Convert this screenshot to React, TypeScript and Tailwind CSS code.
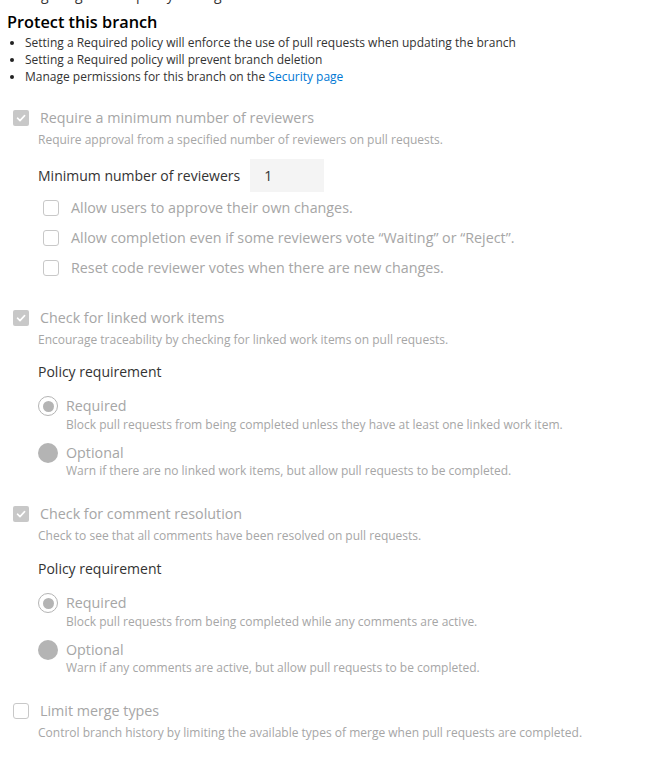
import React from "react";

const font = { fontFamily: '"Open Sans", "Noto Sans", sans-serif' };

function CheckedBox() {
  return (
    <span className="flex h-4 w-4 shrink-0 items-center justify-center rounded-[2px] bg-[#c8c8c8]">
      <svg width="12" height="12" viewBox="0 0 12 12" fill="none">
        <path d="M2.5 6.2 L5 8.6 L9.6 3.6" stroke="#fff" strokeWidth="1.6" strokeLinecap="round" strokeLinejoin="round" />
      </svg>
    </span>
  );
}

function EmptyBox() {
  return <span className="block h-4 w-4 shrink-0 rounded-[3px] border border-[#c8c8c8] bg-white" />;
}

function RadioOn() {
  return (
    <span className="flex h-[20px] w-[20px] shrink-0 items-center justify-center rounded-full border border-[#b4b4b4] bg-white">
      <span className="block h-[11px] w-[11px] rounded-full bg-[#b4b4b4]" />
    </span>
  );
}

function RadioOff() {
  return <span className="block h-[20px] w-[20px] shrink-0 rounded-full bg-[#b4b4b4]" />;
}

function SectionHead({ checked, title, desc }: { checked: boolean; title: string; desc: string }) {
  return (
    <div>
      <div className="flex items-center gap-[11px] pl-[13px]">
        {checked ? <CheckedBox /> : <EmptyBox />}
        <span className="text-[14.3px] leading-[18px] text-[#a6a6a6]">{title}</span>
      </div>
      <div className="mt-[5px] pl-[38px] text-[12px] leading-[16px] text-[#a6a6a6]">{desc}</div>
    </div>
  );
}

function Policy({ req, opt, gap }: { req: string; opt: string; gap: string }) {
  return (
    <div className="pl-[38px]">
      <div className={`${gap} text-[14px] leading-[18px] text-[#333]`}>Policy requirement</div>
      <div className="mt-[15px] flex items-start gap-[8px]">
        <RadioOn />
        <div>
          <div className="text-[14.3px] leading-[20px] text-[#a6a6a6]">Required</div>
          <div className="mt-[1px] text-[12px] leading-[16px] text-[#a6a6a6]">{req}</div>
        </div>
      </div>
      <div className="mt-[10px] flex items-start gap-[8px]">
        <RadioOff />
        <div>
          <div className="text-[14.3px] leading-[20px] text-[#a6a6a6]">Optional</div>
          <div className="text-[12px] leading-[16px] text-[#a6a6a6]">{opt}</div>
        </div>
      </div>
    </div>
  );
}

function SubCheck({ text }: { text: string }) {
  return (
    <div className="flex h-[30px] items-center gap-[12px] pl-[43px]">
      <EmptyBox />
      <span className="text-[14.3px] text-[#a6a6a6]">{text}</span>
    </div>
  );
}

function Bullet({ children }: { children: React.ReactNode }) {
  return (
    <li className="flex items-center">
      <span className="ml-[10px] mr-[11px] block h-[4px] w-[4px] rounded-full bg-[#222]" />
      <span>{children}</span>
    </li>
  );
}

export default function App() {
  return (
    <div className="h-[761px] w-[650px] overflow-hidden bg-white" style={font}>
      <div className="-mt-[14px] pl-[7px] text-[14px] leading-[18px] text-[#333]">Configuring branch policy settings</div>
      <div className="mt-[7px] pl-[7px] text-[16.3px] font-semibold leading-[22px] text-black">Protect this branch</div>
      <ul className="mt-[1px] text-[12px] leading-[17px] text-[#333]">
        <Bullet>Setting a Required policy will enforce the use of pull requests when updating the branch</Bullet>
        <Bullet>Setting a Required policy will prevent branch deletion</Bullet>
        <Bullet>
          Manage permissions for this branch on the <span className="text-[#0078d4]">Security page</span>
        </Bullet>
      </ul>

      <div className="mt-[24px]">
        <SectionHead checked title="Require a minimum number of reviewers" desc="Require approval from a specified number of reviewers on pull requests." />
        <div className="mt-[11px] flex items-center gap-[10px] pl-[38px]">
          <span className="text-[14px] text-[#333]">Minimum number of reviewers</span>
          <div className="flex h-[33px] w-[74px] items-center bg-[#f4f4f4] pl-[14px] text-[14px] text-[#333]">1</div>
        </div>
        <div className="mt-[1px]">
          <SubCheck text="Allow users to approve their own changes." />
          <SubCheck text={"Allow completion even if some reviewers vote \u201cWaiting\u201d or \u201cReject\u201d."} />
          <SubCheck text="Reset code reviewer votes when there are new changes." />
        </div>
      </div>

      <div className="mt-[26px]">
        <SectionHead checked title="Check for linked work items" desc="Encourage traceability by checking for linked work items on pull requests." />
        <Policy gap="mt-[15px]" req="Block pull requests from being completed unless they have at least one linked work item." opt="Warn if there are no linked work items, but allow pull requests to be completed." />
      </div>

      <div className="mt-[26px]">
        <SectionHead checked title="Check for comment resolution" desc="Check to see that all comments have been resolved on pull requests." />
        <Policy gap="mt-[16px]" req="Block pull requests from being completed while any comments are active." opt="Warn if any comments are active, but allow pull requests to be completed." />
      </div>

      <div className="mt-[26px]">
        <SectionHead checked={false} title="Limit merge types" desc="Control branch history by limiting the available types of merge when pull requests are completed." />
      </div>
    </div>
  );
}
